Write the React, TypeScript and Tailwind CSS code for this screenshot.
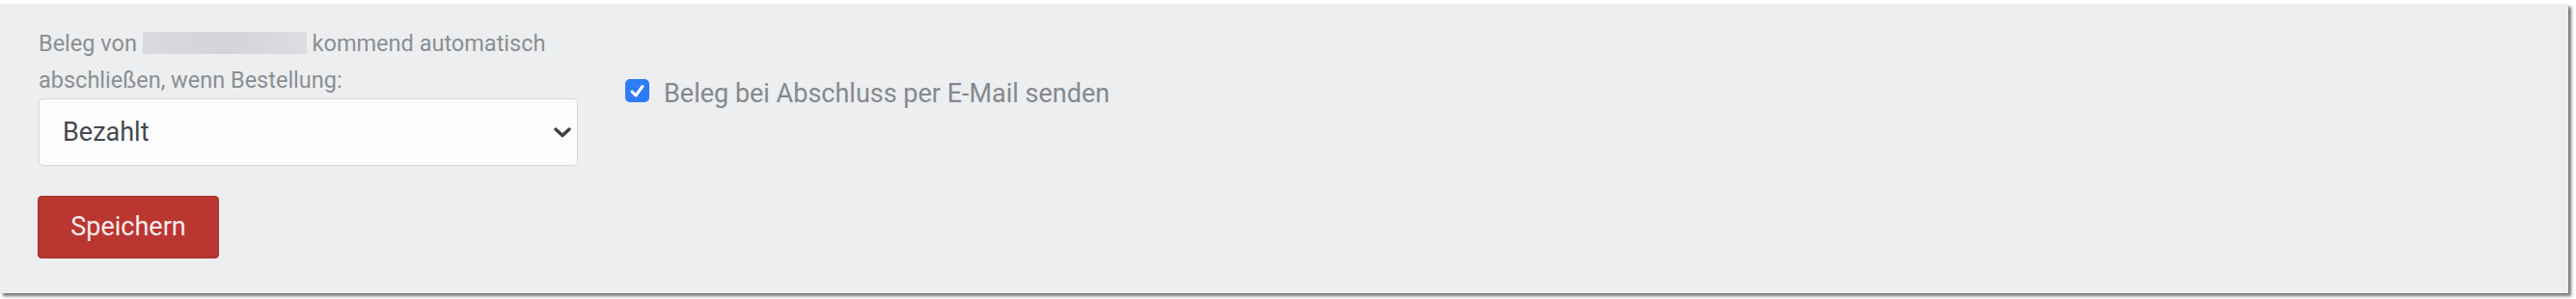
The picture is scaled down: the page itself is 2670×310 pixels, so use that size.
import React from 'react';

const App: React.FC = () => {
  return (
    <div className="w-[2670px] h-[310px] bg-white pt-1 overflow-hidden" style={{ fontFamily: 'Roboto, "Liberation Sans", sans-serif' }}>
      {/* Settings panel */}
      <div className="w-[2662px] h-[300px] bg-[#eceef0] shadow-[3px_3px_3px_rgba(0,0,0,0.55)] pl-10 pt-[22px]">
        <div className="flex items-start">
          {/* Auto close select */}
          <div className="w-[559px] flex flex-col">
            <label className="text-[23.5px] leading-[38px] text-[#8b8e92]">
              <span>Beleg von</span>{' '}
              <span className="inline-block align-middle w-[170px] h-[23px] -mt-1 bg-gradient-to-r from-[#d9dadd] via-[#d2d4d7] to-[#dcdde0]"></span>{' '}
              <span>kommend automatisch</span>
              <br />
              <span>abschließen, wenn Bestellung:</span>
            </label>
            <div className="relative">
              <select
                defaultValue="paid"
                className="appearance-none w-[559px] h-[70px] bg-[#fdfdfd] border border-[#d3d7dc] rounded-[5px] pl-[24px] text-[27px] text-[#45494e] outline-none"
              >
                <option value="paid">Bezahlt</option>
                <option value="sent">Versendet</option>
              </select>
              <svg className="absolute right-[7px] top-[30px] pointer-events-none" width="18" height="11" viewBox="0 0 18 11">
                <polyline points="2,2 9,8.5 16,2" fill="none" stroke="#3b3f44" strokeWidth="3.4" strokeLinecap="round" strokeLinejoin="round" />
              </svg>
            </div>
            <button className="mt-[31px] w-[188px] h-[65px] -ml-px bg-[#b93631] border border-[#a82f2b] rounded-[4px] text-[27px] text-[#fcecec]">
              Speichern
            </button>
          </div>

          {/* Mail checkbox */}
          <div className="ml-[49px] pt-[56px] flex items-start gap-[15px]">
            <span className="w-[25px] h-[24px] rounded-[5px] bg-[#2f7bf5] flex items-center justify-center">
              <svg width="17" height="15" viewBox="0 0 17 15">
                <polyline points="3,8 7,12 14,2.5" fill="none" stroke="white" strokeWidth="3" strokeLinecap="round" strokeLinejoin="round" />
              </svg>
            </span>
            <span className="text-[27px] leading-[30px] text-[#85898e]">Beleg bei Abschluss per E-Mail senden</span>
          </div>
        </div>
      </div>
    </div>
  );
};

export default App;
